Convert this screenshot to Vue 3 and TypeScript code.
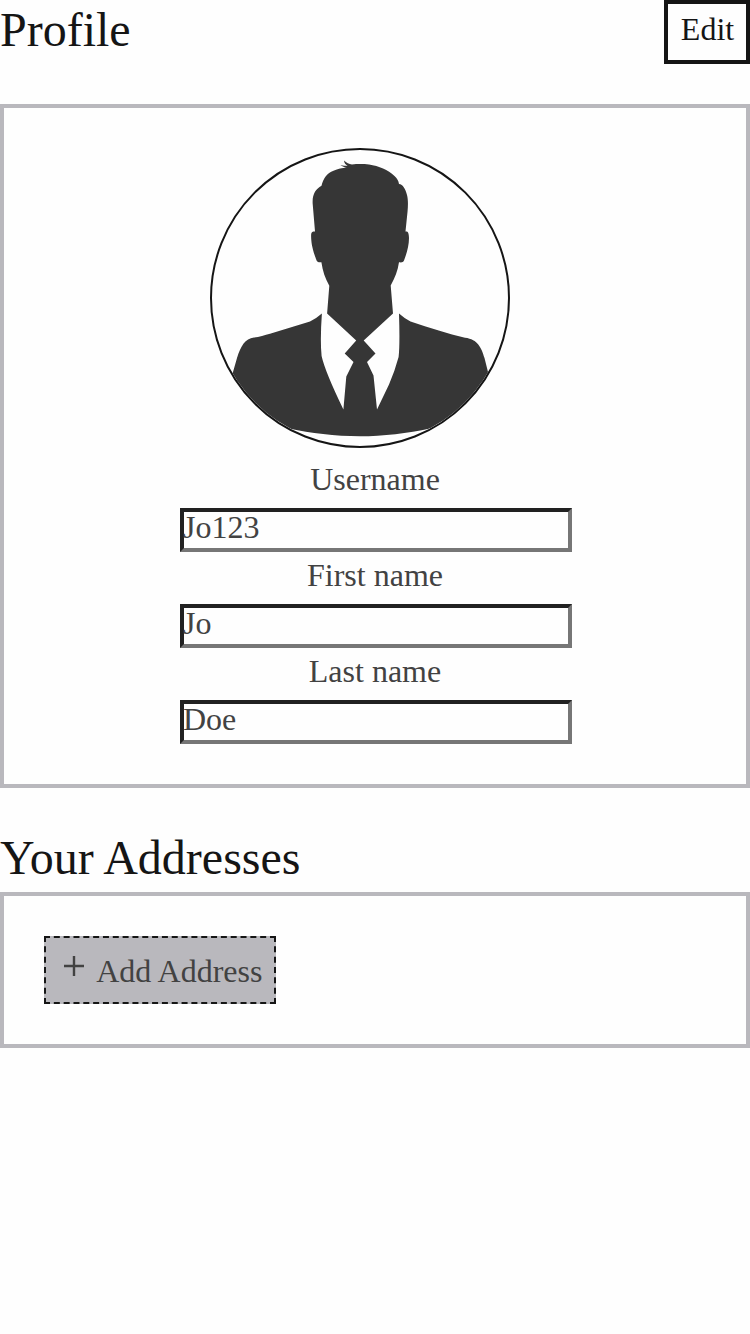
<script setup lang="ts">
interface Field {
  label: string
  value: string
}

const fields: Field[] = [
  { label: 'Username', value: 'Jo123' },
  { label: 'First name', value: 'Jo' },
  { label: 'Last name', value: 'Doe' },
]
</script>

<template>
  <main class="page">
    <header class="header">
      <h1 class="title">Profile</h1>
      <button class="edit" type="button">Edit</button>
    </header>

    <section class="panel profile">
      <div class="avatar">
        <svg viewBox="212 150 296 296" aria-hidden="true">
          <path
            fill="#363636"
            d="M344 160.6 C346.5 163 349 164.4 352 164.4 C358 164 364 164 369 164.6 C379 166 388 170 394.5 176 C397.5 178.7 398.5 181 399 184 C403 184.5 405.5 189 407 195 C408.3 200 408 206 407.6 211 L405.5 231.6 C408 231.2 408.8 233 409 238 C409 246 406.5 254 404 260.5 C403 262.6 401.5 262.5 399 262.3 C397.7 271 395 278 390.7 285.4 L393 313.5 L363.7 340.4 L375.5 353.4 L367 362 L373.5 375.5 L377 409.5 L389 384.5 Q395 370.5 398.6 357 Q400 345 399 313.4 Q404 318 410.5 321.4 C430 327.8 448 333.5 465 337.7 C478 339.2 481.5 348 484.5 358 L489 376 L500 430 L430 428.4 C408 433.2 383 436.2 360 436.2 C335 436.2 310 432.8 290 428.7 L220 430 L231 379 L237 358 C241 345.5 245 339.2 254 337.6 C259 337 265 335.2 270 333.8 L310 321.4 Q316.5 318.2 321.9 313.4 Q320 340 321.6 356 Q325 371.5 343.4 409.5 L346.3 376.5 L353.5 362 L344.7 353.4 L356.2 340.6 L327.1 313.5 L329.3 285.7 C325 278 322.7 271 321.4 262.2 C317 263 316.5 260.5 315.5 257.5 C312 248 311.2 242 311.1 236 C311.2 232.4 312 231.4 315 231.6 L312.7 204 C312 194.5 315.5 189.3 321.5 185.8 C323.5 177.5 327 173.5 333.5 170.7 C338 168.7 342 168 346.7 167.8 C344.5 167.2 342.5 166.6 340.4 164.9 C343.5 165.6 345.5 165.7 347.6 165.9 C345.6 164.7 344.2 163.1 344 160.6 Z"
          />
        </svg>
      </div>
      <div v-for="field in fields" :key="field.label" class="field">
        <span class="label">{{ field.label }}</span>
        <div class="value">{{ field.value }}</div>
      </div>
    </section>

    <h2 class="title addresses-title">Your Addresses</h2>
    <section class="panel addresses">
      <button class="add" type="button">
        <svg class="plus" viewBox="0 0 20 20" aria-hidden="true">
          <path d="M10 0V20M0 10H20" stroke="#424242" stroke-width="2.4" />
        </svg>
        <span>Add Address</span>
      </button>
    </section>
  </main>
</template>

<style>
body {
  background: #fefefe;
}
</style>

<style scoped>
.page {
  font-family: "Liberation Serif", "Times New Roman", serif;
  font-size: 32px;
  line-height: 36px;
  color: #424242;
}

.page * {
  box-sizing: border-box;
}

.header {
  display: flex;
  justify-content: space-between;
  align-items: flex-start;
  height: 104px;
}

.title {
  margin: 0;
  font-size: 48px;
  line-height: 60px;
  font-weight: 400;
  color: #151515;
  font-variant-ligatures: none;
}

.edit {
  width: 86px;
  height: 64px;
  padding: 0 0 6px 1px;
  border: 4px solid #151515;
  background: transparent;
  font: inherit;
  color: #151515;
}

.panel {
  border: 4px solid #b9b8bd;
  padding: 40px;
}

.profile {
  display: flex;
  flex-direction: column;
  align-items: center;
  height: 684px;
}

.avatar {
  flex: none;
  width: 300px;
  height: 300px;
  margin: 0 30px 12px 0;
  border: 2px solid #151515;
  border-radius: 50%;
  overflow: hidden;
}

.avatar svg {
  display: block;
  width: 296px;
  height: 296px;
}

.field {
  display: flex;
  flex: none;
  flex-direction: column;
  align-items: center;
  width: 392px;
  height: 96px;
  margin-left: 2px;
}

.label {
  height: 48px;
  padding-right: 2px;
  line-height: 38px;
}

.value {
  width: 392px;
  height: 44px;
  border: 4px solid;
  border-color: #212121 #767676 #767676 #212121;
  line-height: 30px;
  text-indent: -1px;
}

.addresses-title {
  margin-top: 40px;
  height: 64px;
}

.addresses {
  height: 156px;
}

.add {
  display: flex;
  align-items: center;
  width: 232px;
  height: 68px;
  padding: 2px 0 0 18px;
  border: 2px dashed #151515;
  background: #b9b8bd;
  font: inherit;
  color: #424242;
  white-space: nowrap;
}

.plus {
  flex: none;
  width: 20px;
  height: 20px;
  margin: 0 12.2px 10px 0;
  overflow: visible;
}
</style>
